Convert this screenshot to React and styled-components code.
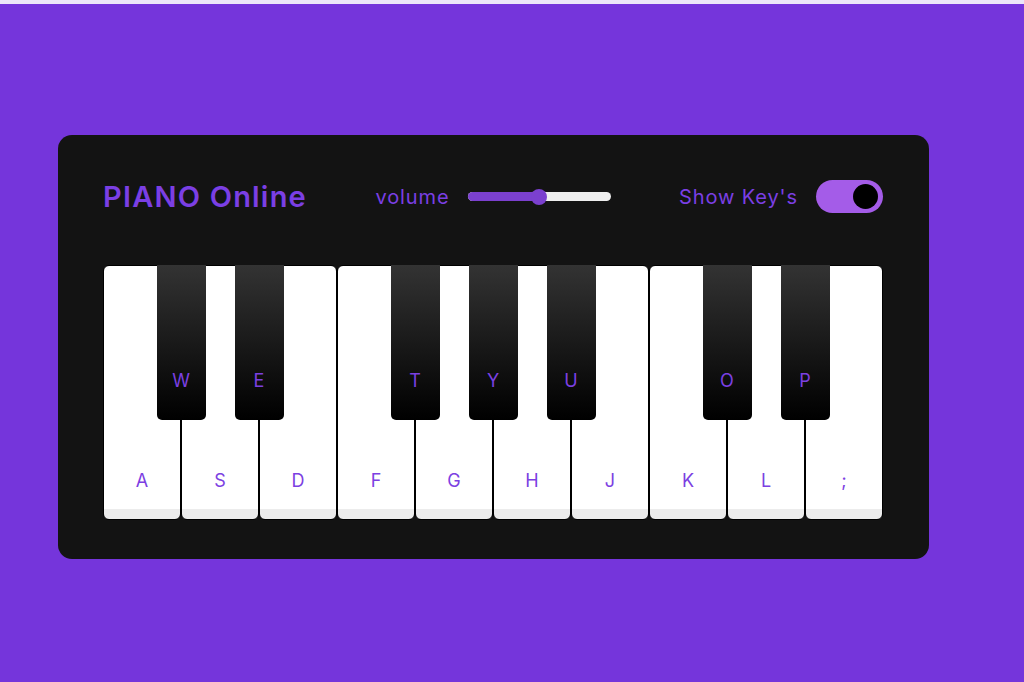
import React, { useState } from "react";
import styled, { createGlobalStyle } from "styled-components";

const GlobalStyle = createGlobalStyle`
  html, body {
    margin: 0;
    padding: 0;
    background: #7535db;
  }
  body {
    font-family: "Inter", "Noto Sans", sans-serif;
  }
`;

const keys = [
  { k: "a", type: "white" },
  { k: "w", type: "black" },
  { k: "s", type: "white" },
  { k: "e", type: "black" },
  { k: "d", type: "white" },
  { k: "f", type: "white" },
  { k: "t", type: "black" },
  { k: "g", type: "white" },
  { k: "y", type: "black" },
  { k: "h", type: "white" },
  { k: "u", type: "black" },
  { k: "j", type: "white" },
  { k: "k", type: "white" },
  { k: "o", type: "black" },
  { k: "l", type: "white" },
  { k: "p", type: "black" },
  { k: ";", type: "white" },
];

const App = () => {
  const [volume, setVolume] = useState(50);
  const [showKeys, setShowKeys] = useState(true);

  return (
    <Page>
      <GlobalStyle />
      <Wrapper>
        <Header>
          <Title>PIANO Online</Title>
          <Control>
            <Label>volume</Label>
            <Slider
              onClick={(e) => {
                const r = e.currentTarget.getBoundingClientRect();
                setVolume(Math.round(((e.clientX - r.left) / r.width) * 100));
              }}
            >
              <SliderFill style={{ width: `${volume}%` }} />
              <SliderThumb style={{ left: `${volume}%` }} />
            </Slider>
          </Control>
          <Control>
            <Label>Show Key's</Label>
            <Toggle $on={showKeys} onClick={() => setShowKeys(!showKeys)}>
              <Knob />
            </Toggle>
          </Control>
        </Header>
        <Keys>
          {keys.map(({ k, type }) =>
            type === "white" ? (
              <WhiteKey key={k}>
                <KeyLabel $hidden={!showKeys}>{k.toUpperCase()}</KeyLabel>
              </WhiteKey>
            ) : (
              <BlackKey key={k}>
                <KeyLabel $hidden={!showKeys}>{k.toUpperCase()}</KeyLabel>
              </BlackKey>
            )
          )}
        </Keys>
      </Wrapper>
    </Page>
  );
};

const Page = styled.div`
  min-height: 678px;
  border-top: 4px solid #ece6f9;
  padding: 131px 0 0 58px;
  box-sizing: border-box;
  display: flex;
  align-items: flex-start;
`;

const Wrapper = styled.div`
  width: 871px;
  height: 424px;
  box-sizing: border-box;
  padding: 45px 46px 39px 45px;
  border-radius: 14px;
  background: #131313;
  display: flex;
  flex-direction: column;
`;

const Header = styled.header`
  height: 33px;
  display: flex;
  align-items: center;
  justify-content: space-between;
  margin-bottom: 52px;
  color: #7b3fe4;
`;

const Title = styled.h2`
  margin: 0;
  font-size: 29px;
  font-weight: 600;
  letter-spacing: 1.2px;
  color: #7b3fe4;
`;

const Control = styled.div`
  display: flex;
  align-items: center;
  gap: 18px;
`;

const Label = styled.span`
  font-size: 20px;
  font-weight: 400;
  letter-spacing: 0.9px;
  color: #7b3fe4;
`;

const Slider = styled.div`
  position: relative;
  width: 143px;
  height: 9px;
  border-radius: 5px;
  background: #eeeeee;
  cursor: pointer;
`;

const SliderFill = styled.div`
  height: 100%;
  border-radius: 5px 0 0 5px;
  background: #7b40cf;
`;

const SliderThumb = styled.div`
  position: absolute;
  top: 50%;
  width: 16px;
  height: 16px;
  border-radius: 50%;
  background: #7b40cf;
  transform: translate(-50%, -50%);
`;

const Toggle = styled.div`
  width: 67px;
  height: 33px;
  box-sizing: border-box;
  padding: 4px 5px;
  border-radius: 17px;
  background: ${(p) => (p.$on ? "#a45ce8" : "#4b4b4b")};
  display: flex;
  align-items: center;
  justify-content: ${(p) => (p.$on ? "flex-end" : "flex-start")};
  cursor: pointer;
`;

const Knob = styled.div`
  width: 25px;
  height: 25px;
  border-radius: 50%;
  background: #000;
`;

const Keys = styled.ul`
  display: flex;
  margin: 0;
  padding: 0;
  list-style: none;
`;

const WhiteKey = styled.li`
  width: 78px;
  height: 255px;
  box-sizing: border-box;
  border: 1px solid #000;
  border-radius: 6px;
  background: linear-gradient(#fff 96%, #ececec 96%);
  display: flex;
  flex-direction: column;
  justify-content: flex-end;
  align-items: center;
  padding-bottom: 27px;
  cursor: pointer;
`;

const BlackKey = styled.li`
  z-index: 2;
  width: 49px;
  height: 155px;
  margin: 0 -24.5px;
  box-sizing: border-box;
  border-radius: 0 0 5px 5px;
  background: linear-gradient(#333, #000);
  display: flex;
  flex-direction: column;
  justify-content: flex-end;
  align-items: center;
  padding-bottom: 28px;
  cursor: pointer;
`;

const KeyLabel = styled.span`
  font-size: 18px;
  font-weight: 400;
  line-height: 22px;
  color: #7c40e2;
  visibility: ${(p) => (p.$hidden ? "hidden" : "visible")};
`;

export default App;
